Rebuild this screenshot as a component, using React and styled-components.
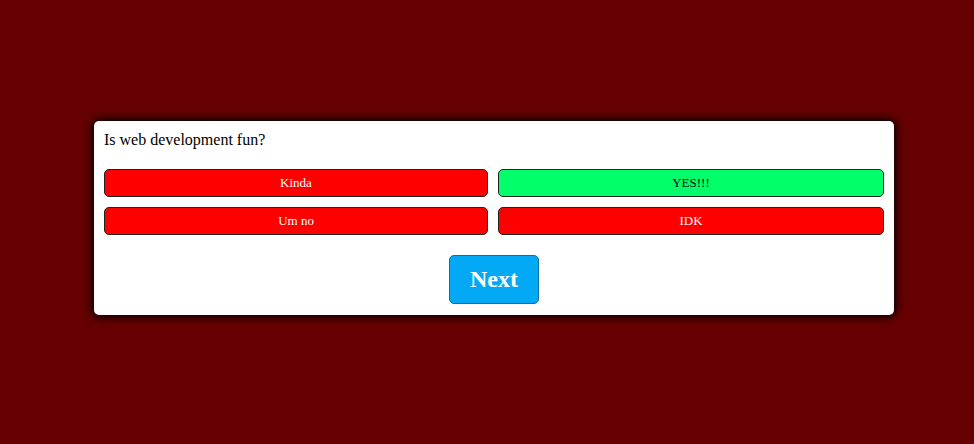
import React from "react";
import styled, { createGlobalStyle } from "styled-components";

const Global = createGlobalStyle`
  html, body { margin: 0; padding: 0; }
  body {
    background: #660000;
    font-family: "Liberation Serif", "Times New Roman", serif;
    width: 974px;
    height: 444px;
    overflow: hidden;
  }
`;

const Page = styled.div`
  padding: 121px 0 0 94px;
`;

const Card = styled.div`
  box-sizing: border-box;
  width: 800px;
  background: #fff;
  border-radius: 5px;
  padding: 10px 10px 11px;
  box-shadow: 0 0 10px 2px #000;
`;

const Question = styled.div`
  font-size: 16px;
  line-height: 18px;
  color: #000;
  margin-bottom: 20px;
`;

const Options = styled.div`
  display: grid;
  grid-template-columns: 384px 386px;
  gap: 10px;
`;

const Option = styled.button`
  box-sizing: border-box;
  height: 28px;
  border: 1px solid #222;
  border-radius: 5px;
  background: ${p => (p.$correct ? "#00ff6a" : "#ff0000")};
  color: ${p => (p.$correct ? "#000" : "#fff")};
  font-family: "Liberation Serif", "Times New Roman", serif;
  font-size: 13px;
  padding: 0;
  cursor: pointer;
`;

const Footer = styled.div`
  display: flex;
  justify-content: center;
  margin-top: 20px;
`;

const NextButton = styled.button`
  box-sizing: border-box;
  width: 90px;
  height: 49px;
  background: #03a9f4;
  border: 1px solid #0b6fa8;
  border-radius: 5px;
  color: #fff;
  font-family: "Liberation Serif", "Times New Roman", serif;
  font-weight: bold;
  font-size: 24px;
  padding: 0;
`;

export default function App() {
  const options = [
    { label: "Kinda" },
    { label: "YES!!!", correct: true },
    { label: "Um no" },
    { label: "IDK" },
  ];
  return (
    <>
      <Global />
      <Page>
        <Card>
          <Question>Is web development fun?</Question>
          <Options>
            {options.map(o => (
              <Option key={o.label} $correct={o.correct}>{o.label}</Option>
            ))}
          </Options>
          <Footer>
            <NextButton>Next</NextButton>
          </Footer>
        </Card>
      </Page>
    </>
  );
}
